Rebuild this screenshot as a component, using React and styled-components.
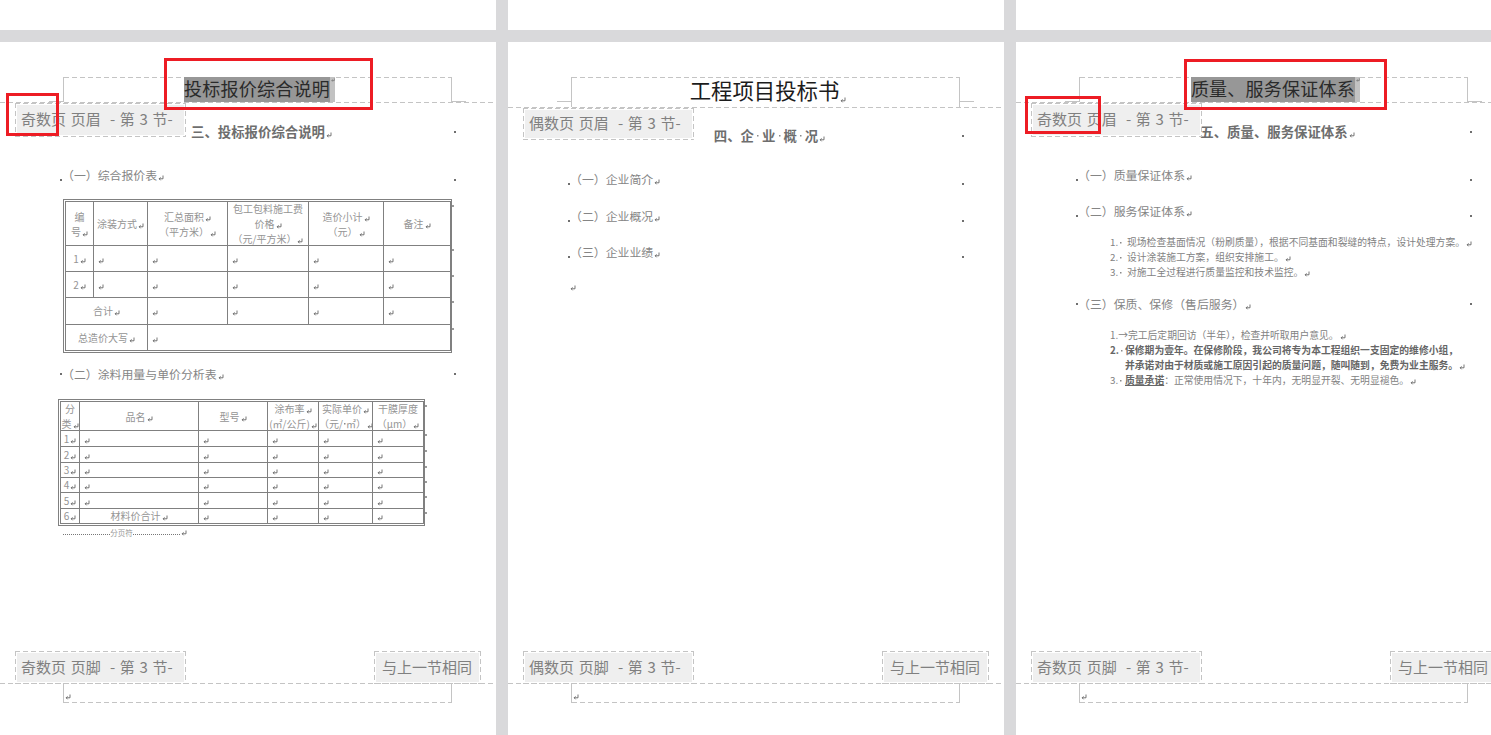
import React from 'react';
import styled, { createGlobalStyle } from 'styled-components';

const LINE = '#c4c4c4';
const dashAcross = `repeating-linear-gradient(90deg, ${LINE} 0 5px, transparent 5px 8px)`;
const dashDown = `repeating-linear-gradient(180deg, ${LINE} 0 5px, transparent 5px 8px)`;

const GlobalStyle = createGlobalStyle`
  html, body {
    margin: 0;
    padding: 0;
    background: #fff;
    overflow: hidden;
  }
  body {
    font-family: "Noto Sans CJK SC", "Liberation Sans", sans-serif;
  }
`;

const Desk = styled.div`
  display: flex;
  width: 1491px;
  height: 735px;
  overflow: hidden;
`;

const Gutter = styled.div`
  flex: 0 0 12px;
  background: #d9d9db;
`;

const Page = styled.section`
  position: relative;
  flex: 0 0 496px;
  display: flex;
  flex-direction: column;
  background: #fff;
`;

const TopStrip = styled.div`
  flex: 0 0 30px;
`;

const Band = styled.div`
  flex: 0 0 12px;
  background: #d9d9db;
`;

const HeaderZone = styled.header`
  position: relative;
  padding-top: 35px;
  padding-bottom: 1px;
  background: ${dashAcross} bottom / 100% 1px no-repeat;
`;

const HeaderBox = styled.div`
  position: relative;
  box-sizing: border-box;
  display: flex;
  justify-content: center;
  align-items: stretch;
  margin-left: 63px;
  width: 389px;
  height: ${props => props.$height}px;
  border-left: 1px solid ${LINE};
  border-right: 1px solid ${LINE};
  background: ${dashAcross} top / 100% 1px no-repeat;

  &::before, &::after {
    content: '';
    position: absolute;
    top: 24px;
    width: 14px;
    height: 1px;
    background: ${LINE};
  }
  &::before { left: -15px; }
  &::after { right: -15px; }
`;

const Title = styled.div`
  display: flex;
  align-items: center;
  height: 25px;
  margin-left: 4px;
  padding-bottom: 3px;
  box-sizing: border-box;
  font-size: 18px;
  letter-spacing: 0.25px;
  color: #2a2a2a;
  background: #979797;
  white-space: nowrap;
`;

const TitleEnd = styled.div`
  align-self: flex-start;
  display: flex;
  justify-content: flex-start;
  width: 5px;
  height: 25px;
  background: #c2c2c2;
  line-height: 6px;
`;

const PlainTitle = styled.div`
  display: flex;
  align-items: center;
  margin-left: 5px;
  padding-bottom: 5px;
  font-size: 21.4px;
  color: #1c1c1c;
  white-space: nowrap;

  svg {
    align-self: flex-end;
    margin-bottom: -1px;
  }
`;

const Tag = styled.div`
  position: absolute;
  ${props => props.$side}: 15px;
  ${props => props.$foot ? 'bottom: calc(100% - 1px); height: 33px;' : `top: 100%; height: ${props.$height}px;`}
  box-sizing: border-box;
  display: flex;
  align-items: center;
  padding: 0 ${props => props.$side === 'left' ? '13px' : '9px'} ${props => props.$foot ? 2 : 4}px ${props => props.$side === 'left' ? '6px' : '8px'};
  background:
    ${dashAcross} top / 100% 1px no-repeat,
    ${dashAcross} bottom / 100% 1px no-repeat,
    ${dashDown} left / 1px 100% no-repeat,
    ${dashDown} right / 1px 100% no-repeat,
    linear-gradient(#efefef, #efefef) center / calc(100% - 4px) calc(100% - 4px) no-repeat;
  font-size: 15px;
  word-spacing: 1.3px;
  color: #808080;
  white-space: pre;
`;

const Body = styled.main`
  flex: 1;
  width: 396px;
  margin-left: 60px;
`;

const Row = styled.div`
  display: flex;
  justify-content: space-between;
  height: 18px;
  margin-top: ${props => props.$top}px;
`;

const Dot = styled.i`
  flex: 0 0 2px;
  width: 2px;
  height: 2px;
  background: ${props => props.$hidden ? 'transparent' : '#6f6f6f'};
  align-self: ${props => props.$mid ? 'center' : 'flex-end'};
  margin-bottom: ${props => props.$mid ? 0 : 3}px;
`;

const Heading = styled.h2`
  flex: 1;
  margin: 0;
  padding-left: 7px;
  text-align: center;
  font-size: 13.4px;
  line-height: 16px;
  font-weight: 700;
  color: #6e6e6e;
`;

const SectionName = styled.h3`
  flex: 1;
  margin: 0;
  font-size: 11.9px;
  line-height: 18px;
  font-weight: 400;
  color: #858585;
`;

// a Word "space" marker: a tiny square centred in a gap
const Spot = styled.span`
  display: inline-block;
  width: ${props => props.$width}px;
  height: 1em;
  vertical-align: -0.12em;
  background: linear-gradient(#8a8a8a, #8a8a8a) center / 1.5px 1.5px no-repeat;
`;

const ReturnGlyph = styled.svg`
  display: inline-block;
  width: 6px;
  height: 6px;
  margin-left: 1px;
  vertical-align: -1px;
`;

const TableFrame = styled.div`
  box-sizing: border-box;
  width: ${props => props.$width}px;
  margin-top: ${props => props.$top}px;
  margin-left: ${props => props.$left}px;
  padding: 1px;
  border: 1px solid #808080;
`;

const Grid = styled.table`
  table-layout: fixed;
  border-collapse: collapse;
  width: 100%;
  color: #949494;
  font-size: 10px;
`;

const Tr = styled.tr`
  height: ${props => props.$height}px;
`;

const Td = styled.td`
  position: relative;
  padding: 0 0 0 ${props => props.$center ? 0 : 3}px;
  border: 1px solid #808080;
  text-align: ${props => props.$center ? 'center' : 'left'};
  line-height: 12px;
  overflow: visible;
`;

const CellClip = styled.div`
  display: flex;
  flex-direction: column;
  justify-content: center;
  height: ${props => props.$height}px;
  overflow: hidden;
  line-height: 15px;
  white-space: nowrap;
`;

const RowEnd = styled.span`
  position: absolute;
  top: 3px;
  right: -4px;
  width: 2px;
  height: 2px;
  background: #9a9a9a;
`;

const Wavy = styled.span`
  text-decoration: underline wavy #d92020 1px;
  text-underline-offset: 1px;
`;

const PageBreak = styled.div`
  display: flex;
  align-items: center;
  width: 124px;
  height: 14px;
  margin-left: 3px;
  font-size: 7.5px;
  line-height: 8px;
  color: #999;
`;

const BreakLine = styled.span`
  flex: 1;
  height: 0;
  margin-top: 3px;
  border-top: 1px dotted #777;
`;

const LoneMark = styled.div`
  margin: 19px 0 0 1px;
  line-height: 6px;
`;

const List = styled.ol`
  list-style: none;
  margin: ${props => props.$top}px 0 0 34px;
  padding: 0;
  font-size: 9.8px;
  line-height: 15px;
  color: #828282;
  white-space: nowrap;
`;

const Item = styled.li`
  display: flex;
  font-weight: ${props => props.$bold ? 700 : 400};
  color: ${props => props.$bold ? '#666' : '#828282'};
`;

const ItemNum = styled.span`
  flex: 0 0 ${props => props.$width}px;
`;

const Under = styled.span`
  font-weight: 700;
  color: #666;
  text-decoration: underline;
`;

const FooterZone = styled.footer`
  position: relative;
  flex: 0 0 52px;
  padding-top: 1px;
  box-sizing: border-box;
  background: ${dashAcross} top / 100% 1px no-repeat;
`;

const FooterBox = styled.div`
  box-sizing: border-box;
  display: flex;
  align-items: flex-end;
  width: 389px;
  height: 19px;
  margin-left: 63px;
  padding: 0 0 3px 0;
  border-left: 1px solid ${LINE};
  border-right: 1px solid ${LINE};
  background: ${dashAcross} bottom / 100% 1px no-repeat;
`;

const RedBox = styled.div`
  position: absolute;
  box-sizing: border-box;
  left: ${props => props.$x}px;
  top: ${props => props.$y}px;
  width: ${props => props.$w}px;
  height: ${props => props.$h}px;
  border: 3px solid #ed1c24;
`;

const Mark = () => (
  <ReturnGlyph viewBox="0 0 6 6">
    <path d="M5 0.5V3.8H1.2M2.6 2.4L1.1 3.8L2.6 5.3" fill="none" stroke="#666" strokeWidth="0.9" />
  </ReturnGlyph>
);

const priceRows = [
  { height: 26, cells: [['1', true], [''], [''], [''], [''], ['']] },
  { height: 26, cells: [['2', true], [''], [''], [''], [''], ['']] },
  { height: 27, cells: [['合计', true, 2], [''], [''], [''], ['']] },
  { height: 26, cells: [['总造价大写', true, 2], ['', false, 4]] },
];

const paintRowHeights = [16, 16, 15, 15, 16, 15];

const PriceTable = () => (
  <TableFrame $width={389} $top={15} $left={3}>
    <Grid>
      <colgroup>
        {[28, 54, 80, 81, 75, 67].map((w, i) => <col key={i} style={{ width: w }} />)}
      </colgroup>
      <tbody>
        <Tr $height={44}>
          <Td $center><CellClip $height={43}><div>编</div><div>号<Mark /></div></CellClip></Td>
          <Td $center><CellClip $height={43}><div>涂装方式<Mark /></div></CellClip></Td>
          <Td $center><CellClip $height={43}><div>汇总面积<Mark /></div><div>（平方米）<Mark /></div></CellClip></Td>
          <Td $center><CellClip $height={43}><div>包工包料施工费</div><div>价格<Mark /></div><div>（元/平方米）<Mark /></div></CellClip></Td>
          <Td $center><CellClip $height={43}><div>造价小计<Mark /></div><div>（元）<Mark /></div></CellClip></Td>
          <Td $center><CellClip $height={43}><div>备注<Mark /></div></CellClip><RowEnd /></Td>
        </Tr>
        {priceRows.map((row, r) => (
          <Tr key={r} $height={row.height}>
            {row.cells.map(([text, center, span], c) => (
              <Td key={c} $center={center} colSpan={span || 1}>
                {text}<Mark />
                {c === row.cells.length - 1 && <RowEnd />}
              </Td>
            ))}
          </Tr>
        ))}
      </tbody>
    </Grid>
  </TableFrame>
);

const PaintTable = () => (
  <TableFrame $width={367} $top={16} $left={-2}>
    <Grid>
      <colgroup>
        {[19, 119, 69, 51, 54, 51].map((w, i) => <col key={i} style={{ width: w }} />)}
      </colgroup>
      <tbody>
        <Tr $height={29}>
          <Td $center><CellClip $height={28}><div>分</div><div>类<Mark /></div></CellClip></Td>
          <Td $center><CellClip $height={28}><div>品名<Mark /></div></CellClip></Td>
          <Td $center><CellClip $height={28}><div>型号<Mark /></div></CellClip></Td>
          <Td $center><CellClip $height={28}><div>涂布率<Mark /></div><div>(㎡/公斤)<Mark /></div></CellClip></Td>
          <Td $center><CellClip $height={28}><div>实际单价<Mark /></div><div>（元/<Spot $width={3} />㎡）<Mark /></div></CellClip></Td>
          <Td $center><CellClip $height={28}><div>干膜厚度</div><div>（<Wavy>μm</Wavy>）<Mark /></div></CellClip><RowEnd /></Td>
        </Tr>
        {paintRowHeights.map((height, r) => (
          <Tr key={r} $height={height}>
            <Td $center>{r + 1}<Mark /></Td>
            {r === 5 ? <Td $center>材料价合计<Mark /></Td> : <Td><Mark /></Td>}
            <Td><Mark /></Td>
            <Td><Mark /></Td>
            <Td><Mark /></Td>
            <Td><Mark /><RowEnd /></Td>
          </Tr>
        ))}
      </tbody>
    </Grid>
  </TableFrame>
);

const Section = ({ top, mid, children }) => (
  <Row $top={top}>
    <Dot $mid={mid} />
    <SectionName>{children}<Mark /></SectionName>
    <Dot $mid={mid} />
  </Row>
);

const HeadRow = ({ top, children }) => (
  <Row $top={top}>
    <Dot $hidden $mid />
    <Heading>{children}<Mark /></Heading>
    <Dot $mid />
  </Row>
);

const Sheet = ({ kind, boxHeight, tagHeight, title, children, boxes }) => (
  <Page>
    <TopStrip />
    <Band />
    <HeaderZone>
      <HeaderBox $height={boxHeight}>{title}</HeaderBox>
      <Tag $side="left" $height={tagHeight}>{kind}页 页眉  - 第 3 节-</Tag>
    </HeaderZone>
    <Body>{children}</Body>
    <FooterZone>
      <Tag $side="left" $foot>{kind}页 页脚  - 第 3 节-</Tag>
      <Tag $side="right" $foot>与上一节相同</Tag>
      <FooterBox><Mark /></FooterBox>
    </FooterZone>
    {boxes && boxes.map((b, i) => <RedBox key={i} $x={b[0]} $y={b[1]} $w={b[2]} $h={b[3]} />)}
  </Page>
);

const SelectedTitle = ({ children }) => (
  <>
    <Title>{children}</Title>
    <TitleEnd><Mark /></TitleEnd>
  </>
);

export default function App() {
  return (
    <Desk>
      <GlobalStyle />
      <Sheet
        kind="奇数"
        boxHeight={25}
        tagHeight={34}
        title={<SelectedTitle>投标报价综合说明</SelectedTitle>}
        boxes={[[164, 58, 209, 52], [6, 93, 53, 43]]}
      >
        <HeadRow top={20}>三、投标报价综合说明</HeadRow>
        <Section top={25}>（一）综合报价表</Section>
        <PriceTable />
        <Section top={12} mid>（二）涂料用量与单价分析表</Section>
        <PaintTable />
        <PageBreak>
          <BreakLine />分页符<BreakLine /><Mark />
        </PageBreak>
      </Sheet>
      <Gutter />
      <Sheet
        kind="偶数"
        boxHeight={30}
        tagHeight={32}
        title={<PlainTitle>工程项目投标书<Mark /></PlainTitle>}
      >
        <HeadRow top={19}>四、企<Spot $width={8} />业<Spot $width={8} />概<Spot $width={8} />况</HeadRow>
        <Section top={25}>（一）企业简介</Section>
        <Section top={19}>（二）企业概况</Section>
        <Section top={18}>（三）企业业绩</Section>
        <LoneMark><Mark /></LoneMark>
      </Sheet>
      <Gutter />
      <Sheet
        kind="奇数"
        boxHeight={25}
        tagHeight={34}
        title={<SelectedTitle>质量、服务保证体系</SelectedTitle>}
        boxes={[[168, 59, 203, 51], [9, 96, 76, 38]]}
      >
        <HeadRow top={20}>五、质量、服务保证体系</HeadRow>
        <Section top={25}>（一）质量保证体系</Section>
        <Section top={18}>（二）服务保证体系</Section>
        <List $top={15}>
          <Item><ItemNum $width={17}>1.<Spot $width={6} /></ItemNum><span>现场检查基面情况（粉刷质量），根据不同基面和裂缝的特点，设计处理方案。<Mark /></span></Item>
          <Item><ItemNum $width={17}>2.<Spot $width={6} /></ItemNum><span>设计涂装施工方案，组织安排施工。<Mark /></span></Item>
          <Item><ItemNum $width={17}>3.<Spot $width={6} /></ItemNum><span>对施工全过程进行质量监控和技术监控。<Mark /></span></Item>
        </List>
        <Section top={15} mid>（三）保质、保修（售后服务）</Section>
        <List $top={15}>
          <Item><ItemNum $width={15}>1.→</ItemNum><span>完工后定期回访（半年），检查并听取用户意见。<Mark /></span></Item>
          <Item $bold>
            <ItemNum $width={15}>2.<Spot $width={5} /></ItemNum>
            <span>保修期为壹年。在保修阶段，我公司将专为本工程组织一支固定的维修小组，<br />并承诺对由于材质或施工原因引起的质量问题，随叫随到，免费为业主服务。<Mark /></span>
          </Item>
          <Item><ItemNum $width={15}>3.<Spot $width={5} /></ItemNum><span><Under>质量承诺</Under>：正常使用情况下，十年内，无明显开裂、无明显褪色。<Mark /></span></Item>
        </List>
      </Sheet>
    </Desk>
  );
}
